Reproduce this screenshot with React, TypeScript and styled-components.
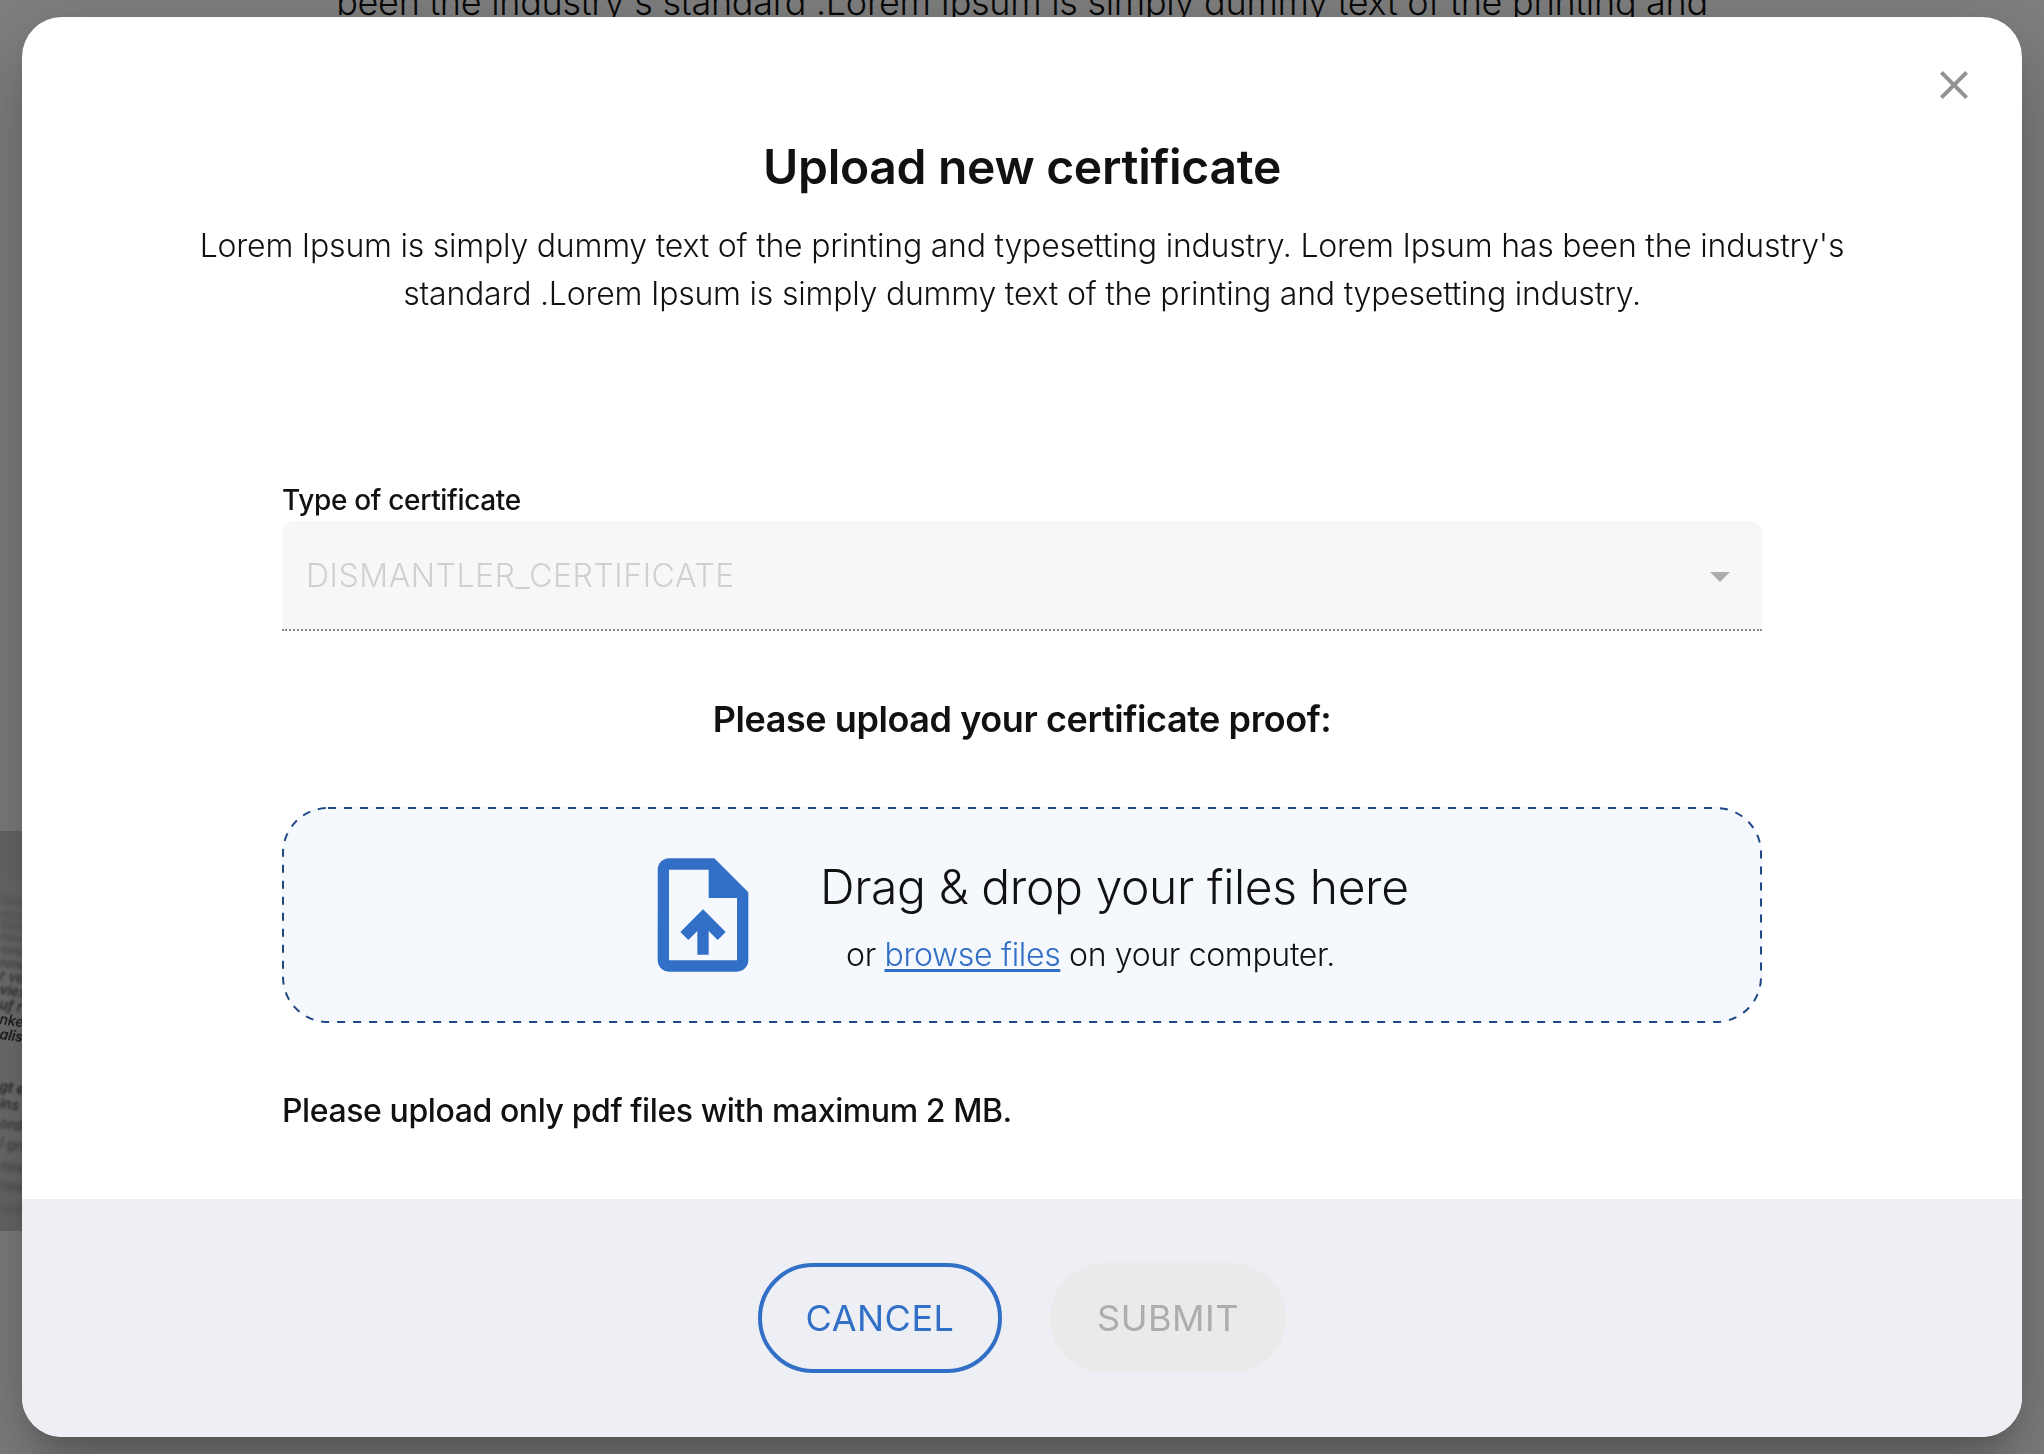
import styled, { createGlobalStyle } from "styled-components";

const GlobalStyle = createGlobalStyle`
  *, *::before, *::after { box-sizing: border-box; }
  html, body { margin: 0; height: 100%; background: #fff; overflow: hidden; }
  body { font-family: Inter, "Liberation Sans", sans-serif; color: #111; }
  h2, h3, p { margin: 0; font-weight: inherit; }
  button { font: inherit; }
`;

const Page = styled.main`
  height: 100vh;
  margin-top: -24px;
`;

const PageIntro = styled.p`
  font-size: 36px;
  font-weight: 300;
  line-height: 52px;
  letter-spacing: -0.29px;
  text-align: center;
  white-space: nowrap;
`;

const DocumentPhoto = styled.svg`
  display: block;
  width: 200px;
  height: 400px;
  margin-top: 803px;
`;

const Backdrop = styled.div`
  position: fixed;
  inset: 0;
  display: flex;
  justify-content: center;
  align-items: center;
  background: rgba(0, 0, 0, 0.5);
`;

const Dialog = styled.section`
  position: relative;
  display: flex;
  flex-direction: column;
  width: 2000px;
  height: 1420px;
  border-radius: 40px;
  overflow: hidden;
  background: #fff;
  box-shadow:
    0 22px 30px -14px rgba(0, 0, 0, 0.2),
    0 48px 76px 6px rgba(0, 0, 0, 0.14),
    0 18px 92px 16px rgba(0, 0, 0, 0.12);
`;

const CloseButton = styled.button`
  position: absolute;
  top: 44px;
  right: 44px;
  width: 48px;
  height: 48px;
  padding: 0;
  border: 0;
  background: none;
  color: #939393;
`;

const Icon = styled.svg<{ $size: number }>`
  display: block;
  flex: none;
  width: ${({ $size }) => $size}px;
  height: ${({ $size }) => $size}px;
  fill: currentColor;
`;

const Header = styled.header`
  padding: 114px 160px 0;
  text-align: center;
`;

const Title = styled.h2`
  font-size: 48px;
  font-weight: 600;
  line-height: 72px;
  letter-spacing: -0.3px;
`;

const Intro = styled.p`
  margin-top: 19px;
  font-size: 32px;
  font-weight: 300;
  line-height: 48px;
  letter-spacing: -0.22px;
`;

const Content = styled.div`
  flex: 1;
  padding: 164px 260px 0;
`;

const Label = styled.label`
  display: block;
  font-size: 28px;
  font-weight: 500;
  line-height: 36px;
  letter-spacing: -0.33px;
`;

const Select = styled.div`
  display: flex;
  align-items: center;
  justify-content: space-between;
  height: 110px;
  margin-top: 3px;
  padding: 0 18px 0 24px;
  border-bottom: 2px dotted #8a8a8a;
  border-radius: 12px 12px 0 0;
  background: #f7f7f7;
  color: #adadad;
`;

const SelectArrow = styled.svg`
  width: 48px;
  height: 48px;
  margin-top: 2px;
  fill: currentColor;
`;

const SelectValue = styled.span`
  font-size: 32px;
  font-weight: 300;
  letter-spacing: 0.55px;
  color: #d0d0d0;
`;

const SectionTitle = styled.h3`
  margin-top: 66px;
  font-size: 36px;
  font-weight: 600;
  line-height: 44px;
  letter-spacing: -0.42px;
  text-align: center;
`;

const DropZone = styled.div`
  position: relative;
  display: flex;
  align-items: center;
  height: 216px;
  margin-top: 66px;
  padding-left: 353px;
  border-radius: 46px;
  background: #f5f8fd;
  color: #326fc6;
`;

const DashedOutline = styled.svg`
  position: absolute;
  inset: 0;
  width: 100%;
  height: 100%;
  fill: none;
  stroke: #1f4a86;
  stroke-width: 2;
  stroke-dasharray: 8 8;
`;

const DropText = styled.div`
  margin-left: 49px;
  padding-bottom: 6px;
  font-weight: 300;
  color: #111;
`;

const DropTitle = styled.p`
  padding-top: 12px;
  font-size: 48px;
  line-height: 60px;
  letter-spacing: -0.38px;
`;

const DropHint = styled.p`
  margin: 14px 0 0 26px;
  font-size: 32px;
  line-height: 48px;
  letter-spacing: -0.33px;
`;

const BrowseLink = styled.span`
  color: #326fc6;
  text-decoration: underline;
  text-decoration-thickness: 3px;
  text-decoration-skip-ink: none;
  text-underline-offset: 3px;
`;

const Note = styled.p`
  margin-top: 64px;
  font-size: 32px;
  font-weight: 500;
  line-height: 48px;
  letter-spacing: -0.41px;
`;

const Footer = styled.footer`
  display: flex;
  justify-content: center;
  align-items: center;
  gap: 48px;
  height: 238px;
  background: #edeff4;
`;

const PillButton = styled.button<{ $variant: "outlined" | "disabled" }>`
  width: ${({ $variant }) => ($variant === "outlined" ? 244 : 236)}px;
  height: 110px;
  padding: 0;
  border: ${({ $variant }) => ($variant === "outlined" ? "4px solid #326fc6" : "0")};
  border-radius: 55px;
  background: ${({ $variant }) => ($variant === "outlined" ? "transparent" : "#eaeaea")};
  color: ${({ $variant }) => ($variant === "outlined" ? "#326fc6" : "#adadad")};
  font-size: 36px;
  font-weight: 400;
  letter-spacing: 0.5px;
`;

const photoLines = [
  { y: 73, text: "mmmm", blur: 3, opacity: 0.3 },
  { y: 87, text: "mnmm", blur: 2.6, opacity: 0.3 },
  { y: 98, text: "mmnm", blur: 2.4, opacity: 0.35 },
  { y: 110, text: "mnmn", blur: 2.2, opacity: 0.35 },
  { y: 123, text: "nmmn", blur: 2, opacity: 0.4 },
  { y: 136, text: "nme n", blur: 1.6, opacity: 0.45 },
  { y: 149, text: "r ve", blur: 1.3, opacity: 0.55 },
  { y: 163, text: "viesb", blur: 1.1, opacity: 0.65 },
  { y: 178, text: "uf r", blur: 0.8, opacity: 0.75 },
  { y: 193, text: "nke", blur: 0.5, opacity: 0.85 },
  { y: 208, text: "alis", blur: 0.4, opacity: 0.9 },
  { y: 260, text: "gt e", blur: 0.8, opacity: 0.75 },
  { y: 277, text: "ins", blur: 1, opacity: 0.65 },
  { y: 297, text: "ordn", blur: 1.4, opacity: 0.55 },
  { y: 317, text: "l gru", blur: 1.8, opacity: 0.45 },
  { y: 339, text: "mno", blur: 2.2, opacity: 0.4 },
  { y: 359, text: "mnn", blur: 2.6, opacity: 0.35 },
  { y: 381, text: "mm", blur: 3, opacity: 0.25 },
];

const CLOSE = "M19 6.41 17.59 5 12 10.59 6.41 5 5 6.41 10.59 12 5 17.59 6.41 19 12 13.41 17.59 19 19 17.59 13.41 12z";
const UPLOAD_FILE =
  "M14 2H6c-1.1 0-1.99.9-1.99 2L4 20c0 1.1.89 2 1.99 2H18c1.1 0 2-.9 2-2V8l-6-6zm4 18H6V4h7v5h5v11zM8 15.01l1.41 1.41L11 14.84V19h2v-4.16l1.59 1.59L16 15.01 12.01 11z";

export default function App() {
  return (
    <>
      <GlobalStyle />
      <Page>
        <PageIntro>
          been the industry's standard .Lorem Ipsum is simply dummy text of the printing and
        </PageIntro>
        <DocumentPhoto viewBox="0 0 200 400">
          <defs>
            <linearGradient id="paper" x1="0" y1="0" x2="0" y2="1">
              <stop offset="0" stopColor="#d0d2d2" />
              <stop offset="0.12" stopColor="#d2d5d5" />
              <stop offset="0.25" stopColor="#dfe2e1" />
              <stop offset="0.62" stopColor="#dfe2e1" />
              <stop offset="1" stopColor="#cfd1d0" />
            </linearGradient>
          </defs>
          <rect width="200" height="400" fill="url(#paper)" />
          {photoLines.map(({ y, text, blur, opacity }) => (
            <text
              key={y}
              x="-1"
              y={y}
              transform={`rotate(8 0 ${y})`}
              fontSize="14"
              fontStyle="italic"
              fontWeight="500"
              opacity={opacity}
              style={{ filter: `blur(${blur}px)` }}
            >
              {text}
            </text>
          ))}
        </DocumentPhoto>
      </Page>

      <Backdrop>
        <Dialog role="dialog" aria-modal="true">
          <CloseButton aria-label="Close">
            <Icon $size={48} viewBox="0 0 24 24">
              <path d={CLOSE} />
            </Icon>
          </CloseButton>

          <Header>
            <Title>Upload new certificate</Title>
            <Intro>
              Lorem Ipsum is simply dummy text of the printing and typesetting industry. Lorem Ipsum has been the
              industry's
              <br />
              standard .Lorem Ipsum is simply dummy text of the printing and typesetting industry.
            </Intro>
          </Header>

          <Content>
            <Label>Type of certificate</Label>
            <Select>
              <SelectValue>DISMANTLER_CERTIFICATE</SelectValue>
              <SelectArrow viewBox="0 0 24 24">
                <path d="m7 10 5 5 5-5z" />
              </SelectArrow>
            </Select>

            <SectionTitle>Please upload your certificate proof:</SectionTitle>

            <DropZone>
              <DashedOutline viewBox="0 0 1480 216">
                <rect x="1" y="1" width="1478" height="214" rx="45" />
              </DashedOutline>
              <Icon $size={136} viewBox="0 0 24 24">
                <path d={UPLOAD_FILE} />
              </Icon>
              <DropText>
                <DropTitle>Drag &amp; drop your files here</DropTitle>
                <DropHint>
                  or <BrowseLink>browse files</BrowseLink> on your computer.
                </DropHint>
              </DropText>
            </DropZone>

            <Note>Please upload only pdf files with maximum 2 MB.</Note>
          </Content>

          <Footer>
            <PillButton $variant="outlined">CANCEL</PillButton>
            <PillButton $variant="disabled" disabled>
              SUBMIT
            </PillButton>
          </Footer>
        </Dialog>
      </Backdrop>
    </>
  );
}
